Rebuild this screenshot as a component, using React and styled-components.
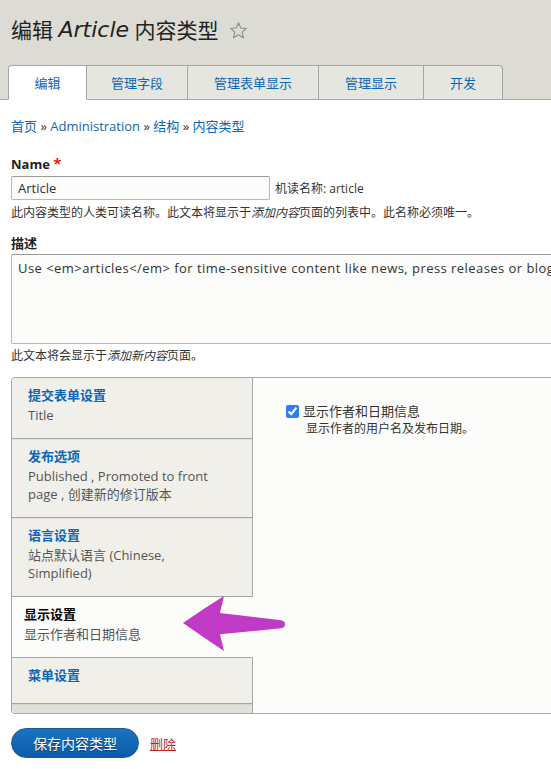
import React from 'react';
import styled, { createGlobalStyle } from 'styled-components';

const GlobalStyle = createGlobalStyle`
  html, body {
    margin: 0;
    padding: 0;
    background: #fff;
    overflow-x: hidden;
  }
  body {
    font-family: "Open Sans", "Noto Sans CJK SC", sans-serif;
    font-size: 13px;
    color: #333;
  }
`;

const tabs = [
  { label: '编辑', width: 78 },
  { label: '管理字段', width: 101 },
  { label: '管理表单显示', width: 131 },
  { label: '管理显示', width: 105 },
  { label: '开发', width: 79 },
];

const verticalTabs = [
  { title: '提交表单设置', summary: ['Title'] },
  { title: '发布选项', summary: ['Published , Promoted to front', 'page , 创建新的修订版本'] },
  { title: '语言设置', summary: ['站点默认语言 (Chinese,', 'Simplified)'] },
  { title: '显示设置', summary: ['显示作者和日期信息'], selected: true },
  { title: '菜单设置', summary: [] },
];

const App = () => {
  return (
    <Page>
      <GlobalStyle />
      <Header>
        <Title>
          编辑 <em>Article</em> 内容类型
          <Star viewBox="0 0 20 20">
            <path d="M10 1.8 L12.4 7.4 L18.4 7.8 L13.8 11.7 L15.3 17.6 L10 14.4 L4.7 17.6 L6.2 11.7 L1.6 7.8 L7.6 7.4 Z" />
          </Star>
        </Title>
        <TabBar>
          {tabs.map((t, i) => (
            <Tab
              key={t.label}
              $width={t.width}
              $active={i === 0}
              $first={i === 0}
              $last={i === tabs.length - 1}
            >
              {t.label}
            </Tab>
          ))}
        </TabBar>
      </Header>

      <Content>
        <Breadcrumb>
          <Link>首页</Link> » <Link>Administration</Link> » <Link>结构</Link> » <Link>内容类型</Link>
        </Breadcrumb>

        <Label $gap={19}>
          Name <Required>*</Required>
        </Label>
        <InputRow>
          <TextInput defaultValue="Article" />
          <MachineName>机读名称: article</MachineName>
        </InputRow>
        <Help $gap={4}>
          此内容类型的人类可读名称。此文本将显示于<em>添加内容</em>页面的列表中。此名称必须唯一。
        </Help>

        <Label $gap={12}>描述</Label>
        <TextArea
          defaultValue="Use <em>articles</em> for time-sensitive content like news, press releases or blog posts."
        />
        <Help $gap={3}>
          此文本将会显示于<em>添加新内容</em>页面。
        </Help>

        <VerticalTabs>
          <Menu>
            {verticalTabs.map((v) => (
              <MenuItem key={v.title} $selected={v.selected} $empty={v.summary.length === 0}>
                <MenuTitle $selected={v.selected}>{v.title}</MenuTitle>
                {v.summary.map((s) => (
                  <Summary key={s}>{s}</Summary>
                ))}
              </MenuItem>
            ))}
            <MenuFooter />
          </Menu>
          <Pane>
            <CheckRow>
              <Checkbox type="checkbox" defaultChecked />
              <CheckLabel>显示作者和日期信息</CheckLabel>
            </CheckRow>
            <CheckHelp>显示作者的用户名及发布日期。</CheckHelp>
          </Pane>
          <Arrow viewBox="0 0 130 80">
            <path d="M12 42 Q32 28 53 15 L49 32 L110 39.3 Q114 40 114 43.3 Q114 46.8 110 47.3 L49 53.3 L53 70 Q32 56 12 42 Z" />
          </Arrow>
        </VerticalTabs>

        <Actions>
          <PrimaryButton>保存内容类型</PrimaryButton>
          <DeleteLink>删除</DeleteLink>
        </Actions>
      </Content>
    </Page>
  );
};

const Page = styled.div`
  width: 551px;
  overflow: hidden;
`;

const Header = styled.div`
  background: #dcdbd4;
  padding-top: 14px;
  border-bottom: 1px solid #a6a6a6;
`;

const Title = styled.h1`
  margin: 0 0 19px 11px;
  font-size: 21px;
  line-height: 32px;
  font-weight: normal;
  color: #222;
  display: flex;
  align-items: center;
  white-space: pre;

  em {
    font-family: "DejaVu Sans", "Noto Sans CJK SC", sans-serif;
    font-style: oblique;
    font-size: 22px;
  }
`;

const Star = styled.svg`
  width: 19px;
  height: 19px;
  margin-left: 10px;
  fill: none;
  stroke: #8b8b85;
  stroke-width: 1.1;
  stroke-linejoin: round;
`;

const TabBar = styled.div`
  display: flex;
  margin-left: 8px;
  margin-bottom: -1px;
`;

const Tab = styled.div`
  box-sizing: border-box;
  width: ${(p) => p.$width + (p.$first ? 1 : 0)}px;
  height: 35px;
  display: flex;
  align-items: center;
  justify-content: center;
  font-size: 13px;
  color: #0b66b5;
  background: ${(p) => (p.$active ? '#fff' : '#e6e6e1')};
  border: 1px solid #a6a6a6;
  border-left: ${(p) => (p.$first ? '1px solid #a6a6a6' : 'none')};
  border-bottom: ${(p) => (p.$active ? '1px solid #fff' : '1px solid #a6a6a6')};
  border-top-left-radius: ${(p) => (p.$first ? '4px' : '0')};
  border-top-right-radius: ${(p) => (p.$last ? '4px' : '0')};
`;

const Content = styled.div`
  padding: 17px 0 20px 11px;
`;

const Breadcrumb = styled.div`
  font-size: 13px;
  line-height: 18px;
  color: #333;
`;

const Link = styled.a`
  color: #0b66b5;
  text-decoration: none;
`;

const Label = styled.div`
  margin-top: ${(p) => p.$gap}px;
  font-size: 13px;
  line-height: 18px;
  font-weight: bold;
  color: #222;
`;

const Required = styled.span`
  color: #e62600;
  font-size: 15px;
`;

const InputRow = styled.div`
  display: flex;
  align-items: center;
  gap: 5px;
  margin-top: 3px;
`;

const TextInput = styled.input`
  box-sizing: border-box;
  width: 259px;
  height: 24px;
  padding: 0 6px;
  border: 1px solid #b8b8b8;
  border-top-color: #999;
  border-radius: 2px;
  background: #fcfcfa;
  font-family: inherit;
  font-size: 13px;
  color: #333;
  outline: none;
`;

const MachineName = styled.span`
  font-size: 12px;
  color: #333;
`;

const Help = styled.div`
  margin-top: ${(p) => p.$gap}px;
  font-size: 12px;
  line-height: 18px;
  color: #333;
  white-space: nowrap;
`;

const TextArea = styled.textarea`
  display: block;
  box-sizing: border-box;
  width: 700px;
  height: 90px;
  margin-top: 2px;
  padding: 4px 6px;
  border: 1px solid #b8b8b8;
  border-top-color: #999;
  border-radius: 2px;
  background: #fcfcfa;
  font-family: inherit;
  font-size: 13px;
  line-height: 18px;
  letter-spacing: 0.45px;
  color: #333;
  resize: none;
  outline: none;
`;

const VerticalTabs = styled.div`
  position: relative;
  display: flex;
  width: 700px;
  margin-top: 12px;
  border: 1px solid #a6a6a6;
  border-radius: 4px;
  background: #fcfcfa;
`;

const Menu = styled.div`
  width: 240px;
  display: flex;
  flex-direction: column;
  background: #f0efea;
  border-right: 1px solid #a6a6a6;
  border-radius: 4px 0 0 4px;
`;

const MenuItem = styled.div`
  padding: 8px 16px ${(p) => (p.$empty ? '17px' : '14px')} ${(p) => (p.$selected ? '12px' : '16px')};
  border-bottom: 1px solid #a6a6a6;
  background: ${(p) => (p.$selected ? '#fcfcfa' : 'transparent')};
  margin-right: ${(p) => (p.$selected ? '-1px' : '0')};
  box-shadow: ${(p) => (p.$selected ? 'none' : '0 1px 0 rgba(0,0,0,0.05)')};
  position: relative;
`;

const MenuTitle = styled.div`
  font-size: 13px;
  line-height: 18px;
  margin-bottom: 2px;
  font-weight: bold;
  color: ${(p) => (p.$selected ? '#000' : '#0b66b5')};
`;

const Summary = styled.div`
  font-size: 13px;
  line-height: 18px;
  color: #555;
`;

const MenuFooter = styled.div`
  flex: 1;
  min-height: 9px;
  background: #e1e0db;
  border-radius: 0 0 0 4px;
`;

const Pane = styled.div`
  flex: 1;
  padding: 24px 0 0 33px;
`;

const CheckRow = styled.div`
  display: flex;
  align-items: center;
  gap: 4px;
`;

const Checkbox = styled.input`
  width: 13px;
  height: 13px;
  margin: 0;
  accent-color: #2f7cf6;
`;

const CheckLabel = styled.span`
  font-size: 13px;
  line-height: 18px;
  color: #333;
`;

const CheckHelp = styled.div`
  padding-left: 20px;
  font-size: 12px;
  line-height: 18px;
  color: #333;
`;

const Arrow = styled.svg`
  position: absolute;
  left: 159px;
  top: 203px;
  width: 130px;
  height: 80px;
  fill: #c13ac6;
`;

const Actions = styled.div`
  display: flex;
  align-items: center;
  gap: 11px;
  margin-top: 14px;
`;

const PrimaryButton = styled.button`
  height: 30px;
  padding: 0 21px;
  border: 1px solid #1e5c90;
  border-radius: 20px;
  background: linear-gradient(to bottom, #1a73c2, #0c5ba8);
  color: #fff;
  font-family: inherit;
  font-size: 14px;
  text-shadow: 0 1px 1px rgba(0, 0, 0, 0.4);
  cursor: pointer;
`;

const DeleteLink = styled.a`
  color: #c4261f;
  font-size: 13px;
  text-decoration: underline;
`;

export default App;
